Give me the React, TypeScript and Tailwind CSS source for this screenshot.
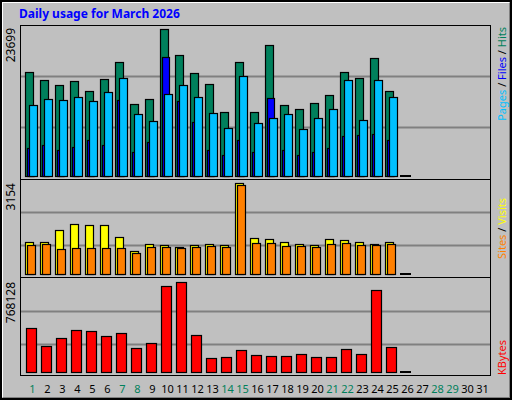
const hits=[72,80,85,81,91,79,62,104,99,29,55,73,84,112,62,112,45,105,109,103,95,72,78,58,91];
const files=[105,99,100,97,101,92,78,114,121,94,85,97,113,128,76,123,118,114,129,118,109,80,120,80,97];
const pages=[148,145,150,147,140,145,100,152,142,57,101,122,150,155,140,152,98,150,155,152,148,136,135,134,140];
const visits=[243,243,231,225,226,226,238,252,245,246,248,246,245,246,184,239,240,243,245,246,240,241,243,245,243];
const sites=[246,245,250,249,249,249,249,254,248,248,249,248,247,248,186,244,244,247,247,248,245,244,246,246,245];
const kb=[330,348,340,332,333,338,335,350,345,288,284,337,360,359,352,357,358,358,356,359,359,351,356,292,349];
const weekend=[1,7,8,14,15,21,22,28,29];

function Panel({h,top,base,grids,series,first}:{h:number;top:number;base:number;grids:number[];series:{vals:number[];off:number;w:number;color:string}[];first?:boolean}){
  return (
    <div className={`border border-black bg-[#c0c0c0] ${first?"":"-mt-px"}`} style={{height:h+2}}>
      <svg width={469} height={h} className="block">
        {grids.map((g,i)=><line key={i} x1={0} x2={469} y1={g-top+0.5} y2={g-top+0.5} stroke="#808080" strokeWidth={2}/>)}
        {series.map((s,si)=>s.vals.map((v,i)=>{
          const x=25+15*i-21+s.off;
          return <rect key={si+"-"+i} x={x+0.5} y={v-top+0.5} width={s.w} height={base-v} fill={s.color} stroke="#000" strokeWidth={1.2}/>;
        }))}
        <line x1={400-21} x2={411-21} y1={base-top} y2={base-top} stroke="#000" strokeWidth={2}/>
      </svg>
    </div>
  );
}

const vt="[writing-mode:vertical-rl] rotate-180 whitespace-nowrap";

export default function App(){
  return (
    <div className="w-[512px] h-[400px] border-2 border-black bg-[#c0c0c0] font-['DejaVu_Sans_Mono']">
      <div className="w-full h-full border-t border-l border-white border-r border-b border-r-[#808080] border-b-[#808080] flex flex-col">
        <div className="h-[22px] pl-[16px] text-[12px] font-bold text-[#0000ff] leading-[22px] font-['DejaVu_Sans_Mono']">Daily usage for March 2026</div>
        <div className="flex">
          <div className="w-[17px] flex flex-col text-[12px] font-['DejaVu_Sans']">
            <div className="h-[155px] flex justify-end items-start pt-[3px]"><span className={vt}>23699</span></div>
            <div className="h-[99px] flex justify-end items-start pt-[3px]"><span className={vt}>3154</span></div>
            <div className="h-[99px] flex justify-end items-start pt-[3px]"><span className={vt}>768128</span></div>
          </div>
          <div className="w-[471px] flex flex-col">
            <Panel first h={153} top={26} base={176} grids={[76,127]} series={[
              {vals:hits,off:0,w:8,color:"#00805c"},
              {vals:pages,off:2,w:7,color:"#0000ff"},
              {vals:files,off:4,w:8,color:"#00c0ff"}]}/>
            <Panel h={97} top={181} base={275} grids={[213,246]} series={[
              {vals:visits,off:0,w:8,color:"#ffff00"},
              {vals:sites,off:2,w:8,color:"#ff8000"}]}/>
            <Panel h={97} top={280} base={374} grids={[313,346]} series={[
              {vals:kb,off:1,w:10,color:"#ff0000"}]}/>
          </div>
          <div className="flex-1 flex flex-col text-[11px] pl-[3px] font-['DejaVu_Sans_Mono']">
            <div className="h-[155px] flex items-start pt-[2px]"><span className={vt}><span className="text-[#00c0ff]">Pages</span> / <span className="text-[#0000ff]">Files</span> / <span className="text-[#00805c]">Hits</span></span></div>
            <div className="h-[99px] flex items-start pt-[18px]"><span className={vt}><span className="text-[#ff8000]">Sites</span> / <span className="text-[#ffff00]">Visits</span></span></div>
            <div className="h-[99px] flex items-end pb-[3px]"><span className={`${vt} text-[#ff0000]`}>KBytes</span></div>
          </div>
        </div>
        <div className="flex pl-[22px] font-['DejaVu_Sans'] text-[11px] leading-[14px] pt-[4px]">
          {Array.from({length:31},(_,i)=>i+1).map(d=>(
            <div key={d} className={`w-[15px] text-center ${weekend.includes(d)?"text-[#00805c]":"text-black"}`}>{d}</div>
          ))}
        </div>
      </div>
    </div>
  );
}
